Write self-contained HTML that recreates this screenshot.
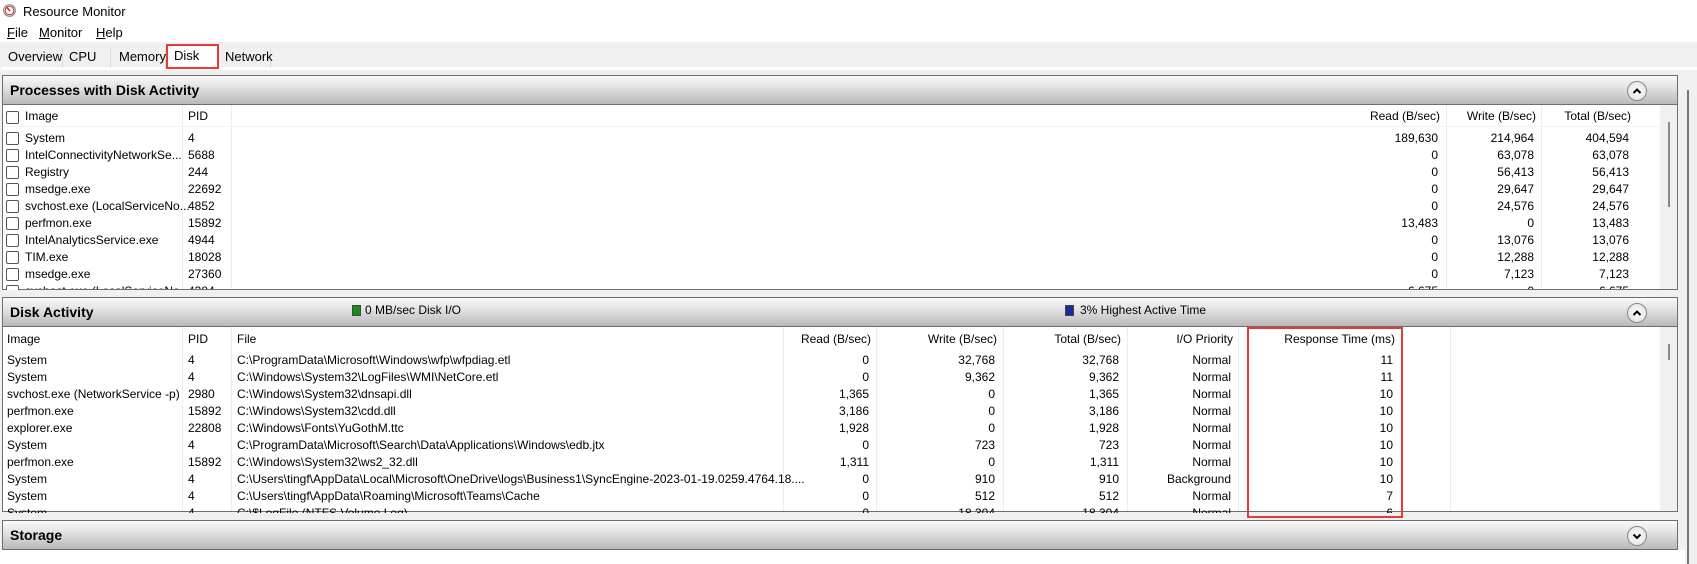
<!DOCTYPE html>
<html><head><meta charset="utf-8"><style>
*{margin:0;padding:0;box-sizing:border-box}
body{width:1697px;height:564px;background:#fff;position:relative;overflow:hidden;font-family:"Liberation Sans",sans-serif;font-size:12px;color:#000}
.a{position:absolute;white-space:nowrap;line-height:17px}
.r{text-align:right}
.hdr{position:absolute;left:2px;width:1676px;height:30px;background:linear-gradient(#fafafa,#e2e2e2 40%,#b9b9b9);border:1px solid #6e6e6e;}
.hdr b{position:absolute;left:7px;top:6px;font-size:14px}
.btn{position:absolute;right:30px;top:5px;width:20px;height:20px;border-radius:50%;border:1px solid #888;background:radial-gradient(#fff,#ddd)}
.btn svg{position:absolute;left:4px;top:5px}
.vl{position:absolute;width:1px;background:#e6eef8}
.cb{position:absolute;width:13px;height:13px;border:1px solid #555;border-radius:2px;background:#fff}
.tab{position:absolute;top:47px;height:21px;line-height:20px;padding:0 6px;border-right:1px solid #ddd;font-size:13px}
</style></head><body>
<svg class="a" style="left:3px;top:4px" width="13" height="13" viewBox="0 0 13 13"><circle cx="6.5" cy="6.5" r="5.8" fill="#fff" stroke="#777"/><circle cx="6.5" cy="6.5" r="4.3" fill="none" stroke="#c33"/><path d="M4 3.5 L7 7" stroke="#c00" stroke-width="1.3"/></svg>
<div class="a" style="left:23px;top:3px;font-size:13px">Resource Monitor</div>
<div class="a" style="left:7px;top:24px;font-size:13px"><u>F</u>ile</div>
<div class="a" style="left:39px;top:24px;font-size:13px"><u>M</u>onitor</div>
<div class="a" style="left:96px;top:24px;font-size:13px"><u>H</u>elp</div>
<div style="position:absolute;left:0;top:42px;width:1697px;height:522px;background:#f0f0f0"></div>
<div style="position:absolute;left:2px;top:67px;width:1695px;height:3px;background:#fff"></div>
<div class="tab" style="left:3px;width:60px;padding-left:5px">Overview</div>
<div class="tab" style="left:63px;width:48px">CPU</div>
<div class="tab" style="left:111px;width:55px;padding-left:8px">Memory</div>
<div class="tab" style="left:166px;top:44px;width:53px;height:25px;background:#fff;border:2px solid #e53a3a">Disk</div>
<div class="tab" style="left:219px;width:52px">Network</div>
<div style="position:absolute;left:1687px;top:90px;width:2px;height:474px;background:#777"></div>

<!-- top panel -->
<div style="position:absolute;left:2px;top:75px;width:1676px;height:215px;background:#fff;border:1px solid #6e6e6e"></div>
<div class="hdr" style="top:75px"><b>Processes with Disk Activity</b><div class="btn"><svg width="10" height="8" viewBox="0 0 10 8"><path d="M1.5 6 L5 2.5 L8.5 6" fill="none" stroke="#000" stroke-width="2"/></svg></div></div>
<div style="position:absolute;left:1660px;top:105px;width:17px;height:184px;background:#f0f0f0"></div>
<div style="position:absolute;left:1668px;top:122px;width:2px;height:85px;background:#888"></div>
<div class="vl" style="left:182px;top:105px;height:184px"></div>
<div class="vl" style="left:231px;top:105px;height:184px"></div>
<div class="vl" style="left:1446px;top:105px;height:184px"></div>
<div class="vl" style="left:1541px;top:105px;height:184px"></div>
<div style="position:absolute;left:3px;top:126px;width:1657px;height:1px;background:#f2f2f2"></div>
<div class="cb" style="left:6px;top:111px"></div>
<div class="a" style="left:25px;top:108px">Image</div>
<div class="a" style="left:188px;top:108px">PID</div>
<div class="a r" style="right:257px;top:108px">Read (B/sec)</div>
<div class="a r" style="right:161px;top:108px">Write (B/sec)</div>
<div class="a r" style="right:66px;top:108px">Total (B/sec)</div>
<div id="top"></div>

<!-- disk activity -->
<div style="position:absolute;left:2px;top:297px;width:1676px;height:215px;background:#fff;border:1px solid #6e6e6e"></div>
<div class="hdr" style="top:297px"><b>Disk Activity</b><div class="btn"><svg width="10" height="8" viewBox="0 0 10 8"><path d="M1.5 6 L5 2.5 L8.5 6" fill="none" stroke="#000" stroke-width="2"/></svg></div></div>
<div style="position:absolute;left:352px;top:305px;width:9px;height:11px;background:#1a8a1a;border:1px solid #444"></div>
<div class="a" style="left:365px;top:302px">0 MB/sec Disk I/O</div>
<div style="position:absolute;left:1065px;top:305px;width:9px;height:11px;background:#1a2a9a;border:1px solid #444"></div>
<div class="a" style="left:1080px;top:302px">3% Highest Active Time</div>
<div style="position:absolute;left:1660px;top:327px;width:17px;height:184px;background:#f0f0f0"></div>
<div style="position:absolute;left:1668px;top:344px;width:2px;height:16px;background:#888"></div>
<div class="vl" style="left:182px;top:327px;height:184px"></div>
<div class="vl" style="left:231px;top:327px;height:184px"></div>
<div class="vl" style="left:783px;top:327px;height:184px"></div>
<div class="vl" style="left:876px;top:327px;height:184px"></div>
<div class="vl" style="left:1003px;top:327px;height:184px"></div>
<div class="vl" style="left:1127px;top:327px;height:184px"></div>
<div class="vl" style="left:1238px;top:327px;height:184px"></div>
<div class="vl" style="left:1450px;top:327px;height:184px"></div>
<div class="a" style="left:7px;top:331px">Image</div>
<div class="a" style="left:188px;top:331px">PID</div>
<div class="a" style="left:237px;top:331px">File</div>
<div class="a r" style="right:826px;top:331px">Read (B/sec)</div>
<div class="a r" style="right:700px;top:331px">Write (B/sec)</div>
<div class="a r" style="right:576px;top:331px">Total (B/sec)</div>
<div class="a r" style="right:464px;top:331px">I/O Priority</div>
<div class="a r" style="right:302px;top:331px">Response Time (ms)</div>
<div id="bot"></div>
<div style="position:absolute;left:1247px;top:327px;width:156px;height:191px;border:2px solid #e53a3a;z-index:5"></div>

<!-- storage -->
<div class="hdr" style="top:520px"><b>Storage</b><div class="btn"><svg width="10" height="8" viewBox="0 0 10 8"><path d="M1.5 2.5 L5 6 L8.5 2.5" fill="none" stroke="#000" stroke-width="2"/></svg></div></div>
<div style="position:absolute;left:0;top:550px;width:1685px;height:14px;background:#fff"></div>

<script>
var t=[["System","4","189,630","214,964","404,594"],["IntelConnectivityNetworkSe...","5688","0","63,078","63,078"],["Registry","244","0","56,413","56,413"],["msedge.exe","22692","0","29,647","29,647"],["svchost.exe (LocalServiceNo...","4852","0","24,576","24,576"],["perfmon.exe","15892","13,483","0","13,483"],["IntelAnalyticsService.exe","4944","0","13,076","13,076"],["TIM.exe","18028","0","12,288","12,288"],["msedge.exe","27360","0","7,123","7,123"],["svchost.exe (LocalServiceNo...","4384","6,675","0","6,675"]];
var h="";t.forEach(function(r,i){var y=130+i*17;var clip=i==9?"height:6px;overflow:hidden;":"";
h+='<div class="cb" style="left:6px;top:'+(y+2)+'px;'+(i==9?'height:5px;border-bottom:none;border-radius:2px 2px 0 0':'')+'"></div>';
h+='<div class="a" style="left:25px;top:'+y+'px;'+clip+'">'+r[0]+'</div><div class="a" style="left:188px;top:'+y+'px;'+clip+'">'+r[1]+'</div><div class="a r" style="right:259px;top:'+y+'px;'+clip+'">'+r[2]+'</div><div class="a r" style="right:163px;top:'+y+'px;'+clip+'">'+r[3]+'</div><div class="a r" style="right:68px;top:'+y+'px;'+clip+'">'+r[4]+'</div>';});
document.getElementById("top").innerHTML=h;
var b=[["System","4","C:\\ProgramData\\Microsoft\\Windows\\wfp\\wfpdiag.etl","0","32,768","32,768","Normal","11"],["System","4","C:\\Windows\\System32\\LogFiles\\WMI\\NetCore.etl","0","9,362","9,362","Normal","11"],["svchost.exe (NetworkService -p)","2980","C:\\Windows\\System32\\dnsapi.dll","1,365","0","1,365","Normal","10"],["perfmon.exe","15892","C:\\Windows\\System32\\cdd.dll","3,186","0","3,186","Normal","10"],["explorer.exe","22808","C:\\Windows\\Fonts\\YuGothM.ttc","1,928","0","1,928","Normal","10"],["System","4","C:\\ProgramData\\Microsoft\\Search\\Data\\Applications\\Windows\\edb.jtx","0","723","723","Normal","10"],["perfmon.exe","15892","C:\\Windows\\System32\\ws2_32.dll","1,311","0","1,311","Normal","10"],["System","4","C:\\Users\\tingf\\AppData\\Local\\Microsoft\\OneDrive\\logs\\Business1\\SyncEngine-2023-01-19.0259.4764.18....","0","910","910","Background","10"],["System","4","C:\\Users\\tingf\\AppData\\Roaming\\Microsoft\\Teams\\Cache","0","512","512","Normal","7"],["System","4","C:\\$LogFile (NTFS Volume Log)","0","18,304","18,304","Normal","6"]];
h="";b.forEach(function(r,i){var y=352+i*17;var c=i==9?"height:8px;overflow:hidden;":"";
h+='<div class="a" style="left:7px;top:'+y+'px;'+c+'">'+r[0]+'</div><div class="a" style="left:188px;top:'+y+'px;'+c+'">'+r[1]+'</div><div class="a" style="left:237px;top:'+y+'px;'+c+'">'+r[2]+'</div><div class="a r" style="right:828px;top:'+y+'px;'+c+'">'+r[3]+'</div><div class="a r" style="right:702px;top:'+y+'px;'+c+'">'+r[4]+'</div><div class="a r" style="right:578px;top:'+y+'px;'+c+'">'+r[5]+'</div><div class="a r" style="right:466px;top:'+y+'px;'+c+'">'+r[6]+'</div><div class="a r" style="right:304px;top:'+y+'px;'+c+'">'+r[7]+'</div>';});
document.getElementById("bot").innerHTML=h;
</script>
</body></html>
